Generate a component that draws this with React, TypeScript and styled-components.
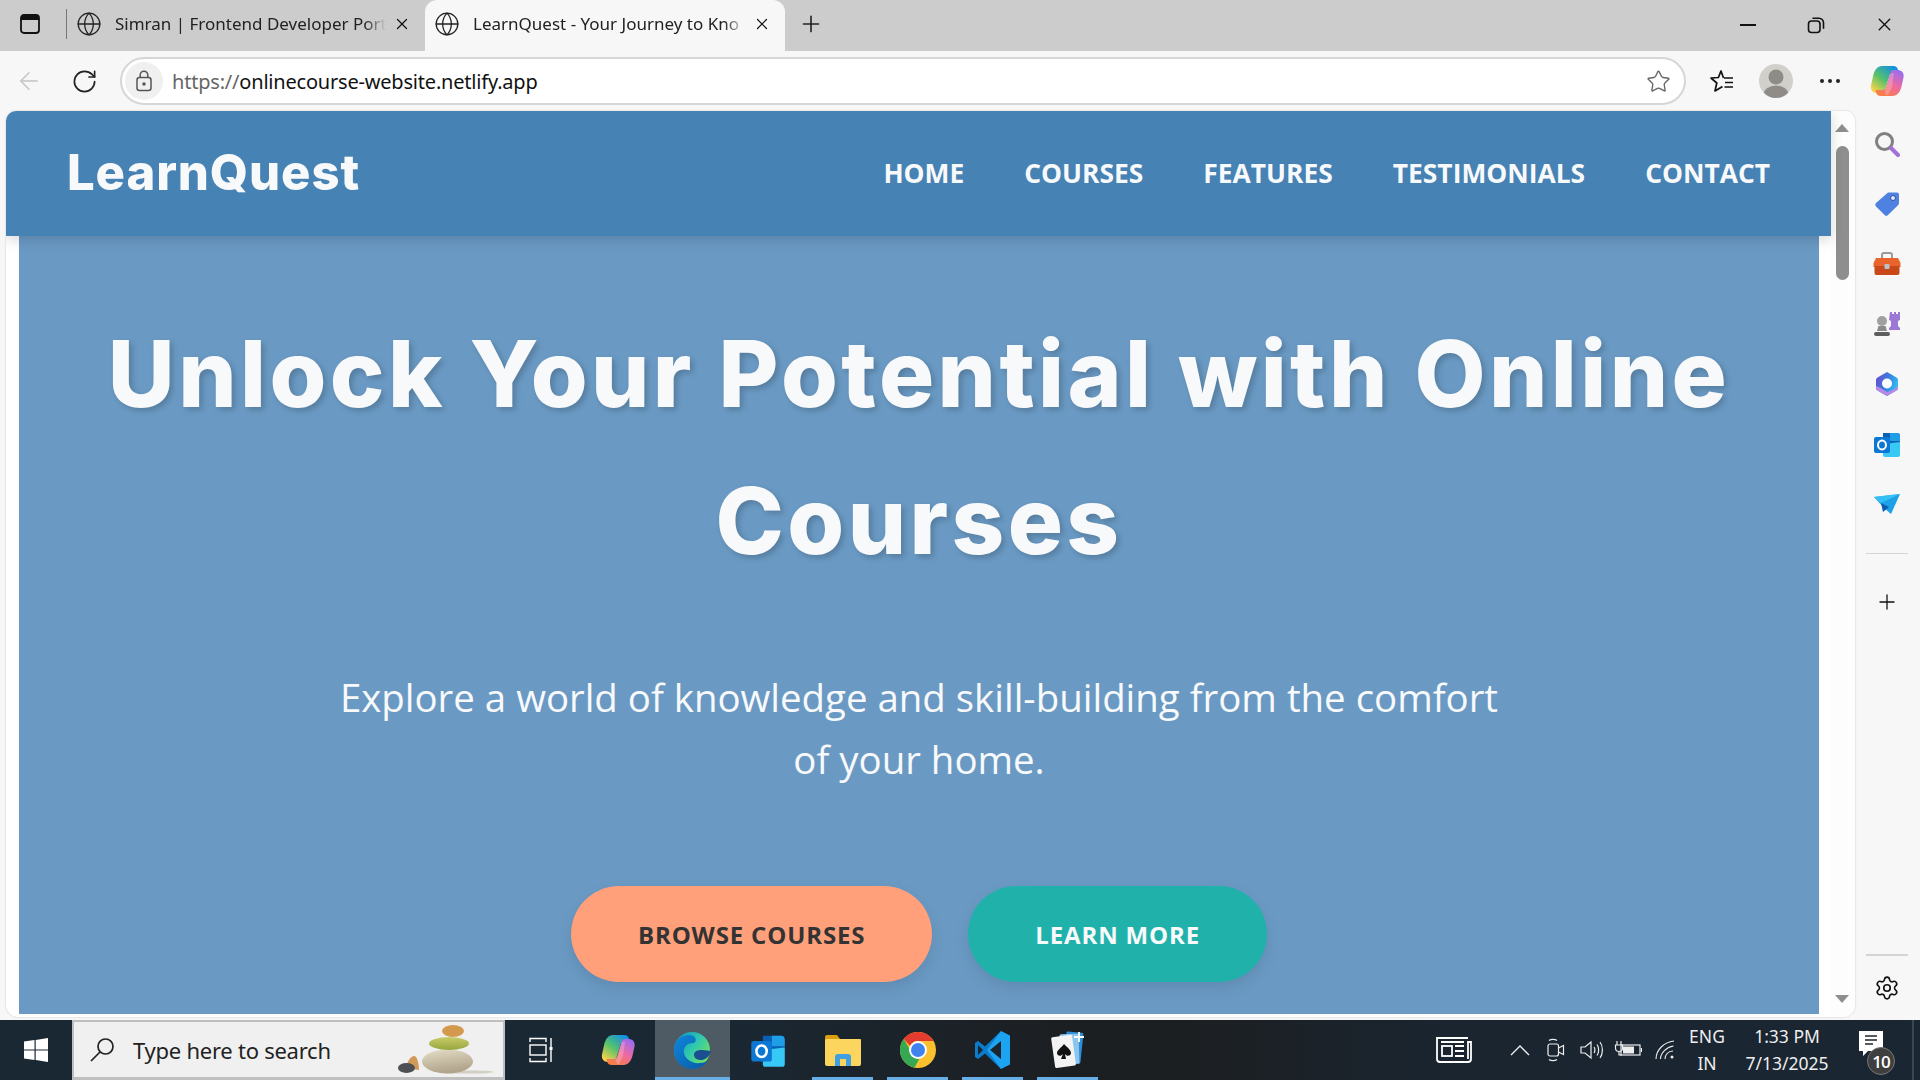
import React from "react";
import styled, { createGlobalStyle } from "styled-components";
import { ArrowLeft, Globe, Plus, RotateCw, Settings, Star, X } from "lucide-react";

const GlobalStyle = createGlobalStyle`
  html, body { margin: 0; padding: 0; background: #f7f7f7; overflow: hidden; }
  * { box-sizing: border-box; }
`;

const Screen = styled.div`
  width: 1920px;
  height: 1080px;
  display: flex;
  flex-direction: column;
  overflow: hidden;
  font-family: "Open Sans", sans-serif;
`;

/* browser chrome */
const TabStrip = styled.div`
  height: 51px;
  background: #cccccc;
  display: flex;
  align-items: center;
  flex-shrink: 0;
`;

const PaneButton = styled.div`
  width: 66px;
  display: flex;
  justify-content: center;
  padding: 0 6px 3px 0;
`;

const TabSeparator = styled.div`
  width: 1px;
  height: 30px;
  background: #777;
  margin: 0 5px 3px 0;
`;

const Tab = styled.div<{ $active?: boolean }>`
  width: ${(p) => (p.$active ? 360 : 353)}px;
  height: 51px;
  display: flex;
  align-items: center;
  gap: 13px;
  padding: 0 14px 4px ${(p) => (p.$active ? 9 : 4)}px;
  background: ${(p) => (p.$active ? "#f7f7f7" : "transparent")};
  border-radius: ${(p) => (p.$active ? "12px 12px 0 0" : "0")};
  color: #222;
`;

const TabTitle = styled.span`
  flex: 1;
  margin-right: -6px;
  overflow: hidden;
  white-space: nowrap;
  font-family: "Noto Sans", sans-serif;
  font-size: 17px;
  letter-spacing: 0;
  -webkit-mask-image: linear-gradient(90deg, #000 92%, transparent 100%);
  mask-image: linear-gradient(90deg, #000 92%, transparent 100%);
`;

const NewTab = styled.div`
  width: 52px;
  display: flex;
  justify-content: center;
  padding-bottom: 4px;
`;

const WindowControls = styled.div`
  margin-left: auto;
  display: flex;
  align-items: center;
  padding: 0 1px 2px 0;
`;

const WindowButton = styled.div`
  width: 68.5px;
  display: flex;
  justify-content: center;
`;

const Toolbar = styled.div`
  height: 60px;
  background: #f7f7f7;
  display: flex;
  align-items: center;
  flex-shrink: 0;
`;

const NavButton = styled.div`
  width: 55px;
  display: flex;
  justify-content: center;
  padding-left: 3px;
`;

const AddressBar = styled.div`
  width: 1566px;
  height: 48px;
  margin-left: 10px;
  border: 2px solid #d6d6d6;
  border-radius: 24px;
  background: #fff;
  display: flex;
  align-items: center;
  padding: 0 13px 0 3px;
`;

const LockBadge = styled.div`
  width: 38px;
  height: 38px;
  border-radius: 50%;
  background: #f0f0f0;
  display: flex;
  align-items: center;
  justify-content: center;
  margin-right: 9px;
`;

const Url = styled.div`
  flex: 1;
  font-family: "Noto Sans", sans-serif;
  font-size: 20px;
  letter-spacing: -0.2px;
  color: #111;
  span {
    color: #666;
  }
`;

const ToolbarIcons = styled.div`
  display: flex;
  align-items: center;
`;

const ToolbarIcon = styled.div<{ $w: number }>`
  width: ${(p) => p.$w}px;
  display: flex;
  justify-content: center;
`;

const Avatar = styled.div`
  width: 34px;
  height: 34px;
  border-radius: 50%;
  background: #d2d0cb;
  overflow: hidden;
  display: flex;
`;

/* page area */
const Main = styled.div`
  height: 909px;
  display: flex;
  background: #f7f7f7;
  flex-shrink: 0;
`;

const PageFrame = styled.div`
  flex: 1;
  margin: 0 0 3px 6px;
  background: #fff;
  border-radius: 10px 10px 12px 12px;
  box-shadow: 0 0 2px rgba(0, 0, 0, 0.22);
  overflow: hidden;
  display: flex;
`;

const Viewport = styled.div`
  width: 1825px;
  display: flex;
  flex-direction: column;
  padding-bottom: 3px;
`;

const SiteHeader = styled.header`
  position: relative;
  z-index: 2;
  height: 125px;
  flex-shrink: 0;
  background: #4682b4;
  box-shadow: 0 4px 12px rgba(0, 0, 0, 0.15);
  display: flex;
  align-items: center;
  justify-content: space-between;
  padding: 0 61px 2px 61px;
`;

const Logo = styled.div`
  font-family: Inter, sans-serif;
  font-size: 49px;
  font-weight: 800;
  letter-spacing: 0.9px;
  color: #f8f9fa;
`;

const NavLinks = styled.nav`
  display: flex;
  gap: 60px;
`;

const NavLink = styled.a`
  font-size: 26.4px;
  font-weight: 700;
  color: #f8f9fa;
`;

const Hero = styled.section`
  flex: 1;
  margin: 0 12px 0 13px;
  background: #6a9ac4;
  overflow: hidden;
  display: flex;
  flex-direction: column;
  align-items: center;
  padding-top: 64px;
`;

const HeroTitle = styled.h1`
  margin: 0;
  width: 1700px;
  text-align: center;
  font-family: Inter, sans-serif;
  font-size: 92px;
  font-weight: 800;
  letter-spacing: 3.4px;
  line-height: 147px;
  color: #f8f9fa;
  text-shadow: 3px 3px 6px rgba(0, 0, 0, 0.2);
`;

const HeroText = styled.p`
  margin: 72px 0 0;
  width: 1200px;
  text-align: center;
  font-size: 38.4px;
  line-height: 62px;
  color: #f8f9fa;
`;

const HeroActions = styled.div`
  display: flex;
  gap: 36px;
  margin-top: 96px;
`;

const HeroButton = styled.a<{ $tone: "coral" | "teal" }>`
  height: 96px;
  padding: 0 67px;
  border-radius: 50px;
  display: flex;
  align-items: center;
  font-size: 24px;
  font-weight: 700;
  letter-spacing: 0.85px;
  background: ${(p) => (p.$tone === "coral" ? "#ffa07a" : "#20b2aa")};
  color: ${(p) => (p.$tone === "coral" ? "#333" : "#f8f9fa")};
  box-shadow: 0 6px 15px rgba(0, 0, 0, 0.1);
`;

const ScrollTrack = styled.div`
  flex: 1;
  background: #fdfdfd;
  display: flex;
  flex-direction: column;
  align-items: center;
  padding: 13px 2px 14px 0;
`;

const ScrollArrow = styled.div<{ $down?: boolean }>`
  width: 0;
  height: 0;
  border-left: 7.5px solid transparent;
  border-right: 7.5px solid transparent;
  ${(p) =>
    p.$down
      ? "border-top: 8px solid #8e8e8e; margin-top: auto;"
      : "border-bottom: 8px solid #8e8e8e;"}
`;

const ScrollThumb = styled.div`
  width: 13px;
  height: 134px;
  margin-top: 14px;
  border-radius: 7px;
  background: #8e8e8e;
`;

const SideBar = styled.aside`
  width: 65px;
  display: flex;
  flex-direction: column;
  align-items: center;
  padding: 18px 2px 0 0;
`;

const SideIcon = styled.div`
  width: 30px;
  height: 30px;
  margin-bottom: 30px;
  display: flex;
  align-items: center;
  justify-content: center;
`;

const SideRule = styled.div<{ $bottom?: boolean }>`
  width: 42px;
  height: ${(p) => (p.$bottom ? 2 : 1)}px;
  background: #d4d4d4;
  flex-shrink: 0;
  margin: ${(p) => (p.$bottom ? "auto 0 19px" : "4px 0 33px")};
`;

const SideGear = styled.div`
  margin-bottom: 19px;
  display: flex;
`;

/* taskbar */
const Taskbar = styled.div`
  height: 60px;
  flex-shrink: 0;
  display: flex;
  align-items: center;
  background: linear-gradient(90deg, #1a2834 0%, #1a2834 36%, #1c1f22 55%, #1c1f22 62%, #1a2530 76%, #1a2632 100%);
  color: #f2f2f2;
`;

const StartButton = styled.div`
  width: 72px;
  height: 60px;
  display: flex;
  align-items: center;
  justify-content: center;
`;

const SearchBox = styled.div`
  position: relative;
  width: 433px;
  height: 60px;
  border: 2px solid #bfbfbf;
  border-bottom-width: 3px;
  background: #f0f0f0;
  display: flex;
  align-items: center;
  padding: 1px 0 0 15px;
  gap: 18px;
  color: #222;
  font-size: 22px;
  font-family: "Noto Sans", sans-serif;
  letter-spacing: -0.25px;
`;

const Stones = styled.svg`
  position: absolute;
  right: 5px;
  top: 0;
`;

const TaskButton = styled.div<{ $active?: boolean; $open?: boolean }>`
  position: relative;
  width: 75px;
  height: 60px;
  display: flex;
  align-items: center;
  justify-content: center;
  background: ${(p) => (p.$active ? "#4e5a64" : "transparent")};
  ${(p) =>
    p.$open &&
    `&::after {
      content: "";
      position: absolute;
      left: ${p.$active ? 0 : 7}px;
      right: ${p.$active ? 0 : 7}px;
      bottom: 0;
      height: 3px;
      background: #67aee6;
    }`}
`;

const Tray = styled.div`
  margin: 0 6px 0 auto;
  height: 60px;
  display: flex;
  align-items: center;
  padding-right: 2px;
  border-right: 2px solid #3a4650;
`;

const TrayIcon = styled.div<{ $w: number }>`
  width: ${(p) => p.$w}px;
  display: flex;
  justify-content: center;
`;

const TrayText = styled.div<{ $w: number }>`
  width: ${(p) => p.$w}px;
  text-align: center;
  font-family: "Noto Sans", sans-serif;
  font-size: 17.5px;
  line-height: 27px;
  color: #eee;
`;

const NotifyBox = styled.div`
  position: relative;
  width: 71px;
  height: 60px;
  display: flex;
  align-items: center;
  padding-left: 20px;
`;

const NotifyBubble = styled.svg`
  margin-top: -12px;
`;

const NotifyCount = styled.div`
  position: absolute;
  left: 28px;
  top: 27px;
  width: 28px;
  height: 28px;
  border-radius: 50%;
  background: #3f3f3f;
  border: 1px solid #777;
  display: flex;
  align-items: center;
  justify-content: center;
  font-size: 17px;
  font-weight: 600;
  letter-spacing: -1px;
  color: #fff;
`;

const RestoreIcon = () => (
  <svg width="18" height="18" viewBox="0 0 18 18" fill="none" stroke="#111" strokeWidth="1.6">
    <rect x="1.5" y="5" width="11.5" height="11.5" rx="3" />
    <path d="M5.5 2.2h6.5a4.5 4.5 0 0 1 4.5 4.5v6" />
  </svg>
);

const PaneIcon = () => (
  <svg width="22" height="22" viewBox="0 0 22 22" fill="none">
    <rect x="2" y="2" width="18" height="18" rx="3" stroke="#111" strokeWidth="1.8" />
    <path d="M2 7V5a3 3 0 0 1 3-3h12a3 3 0 0 1 3 3v2z" fill="#111" />
  </svg>
);

const LockIcon = () => (
  <svg width="20" height="24" viewBox="0 0 20 24" fill="none" stroke="#555" strokeWidth="1.5">
    <rect x="3" y="8.5" width="14" height="13" rx="2.5" />
    <path d="M6.2 8.5V6a3.8 3.8 0 0 1 7.6 0v2.5" />
    <circle cx="10" cy="15" r="1" fill="#555" />
  </svg>
);

const FavoritesIcon = () => (
  <svg width="26" height="26" viewBox="0 0 26 26" fill="none" stroke="#111" strokeWidth="1.7" strokeLinejoin="round">
    <path d="M14.500 10l-2.500-7-2.600 6.500L2 10l5.800 5-1.800 8 7.500-4.500" />
    <path d="M15 10h9M16 14.500h8M15.500 19h8.500" />
  </svg>
);

const AvatarShape = () => (
  <svg width="34" height="34" viewBox="0 0 34 34">
    <circle cx="17" cy="13" r="7.5" fill="#8f8b87" />
    <ellipse cx="17" cy="31" rx="12.5" ry="9.5" fill="#8f8b87" />
  </svg>
);

const DotsIcon = () => (
  <svg width="22" height="6" viewBox="0 0 22 6" fill="#222">
    <circle cx="3" cy="3" r="2" />
    <circle cx="11" cy="3" r="2" />
    <circle cx="19" cy="3" r="2" />
  </svg>
);

const CopilotIcon = ({ size = 34, id }: { size?: number; id: string }) => (
  <svg width={size} height={size} viewBox="0 0 34 34">
    <defs>
      <linearGradient id={`${id}a`} x1="0.1" y1="0.9" x2="0.8" y2="0">
        <stop offset="0" stopColor="#f7d348" />
        <stop offset="0.45" stopColor="#57c26a" />
        <stop offset="1" stopColor="#0f8fe8" />
      </linearGradient>
      <linearGradient id={`${id}b`} x1="0.2" y1="1" x2="0.8" y2="0">
        <stop offset="0" stopColor="#f9803d" />
        <stop offset="0.5" stopColor="#ee6aa0" />
        <stop offset="1" stopColor="#9a6cf0" />
      </linearGradient>
    </defs>
    <path d="M23 2c3 0 4.500 1.500 5 4l1 4h-9l-5 16c-.6 2-2.300 3-4.400 3H7C2.600 29 .2 25.500 1 21.500l2.200-10C4.400 6 7.600 2 12 2z" fill={`url(#${id}a)`} />
    <path d="M11 32c-3 0-4.500-1.500-5-4l-.6-2H13c1.500 0 2.500-1 3-2.500L20.500 8.500C21 7 22 6 24 6h3.500c4.400 0 6.800 3 6 7.500l-2 9C30.300 28 27 32 22.500 32z" fill={`url(#${id}b)`} />
    <path d="M21 9l-4.700 15c-.3 1-.9 1.800-1.800 2.300L16 31h2l4-8 2-14z" fill="#fff" opacity="0.22" />
  </svg>
);

const MagnifierIcon = () => (
  <svg width="26" height="26" viewBox="0 0 26 26" fill="none">
    <circle cx="10.500" cy="10.500" r="8" stroke="#808080" strokeWidth="3" />
    <path d="M17 17l7 7" stroke="#a56fd8" strokeWidth="4" strokeLinecap="round" />
  </svg>
);

const TagIcon = () => (
  <svg width="26" height="26" viewBox="0 0 26 26">
    <path d="M14 1.500h9a2 2 0 0 1 2 2V12a3 3 0 0 1-1 2.200L14 24a2.400 2.400 0 0 1-3.400 0L2 15.400A2.400 2.400 0 0 1 2 12z" fill="#4f82e0" />
    <circle cx="19" cy="7" r="2.500" fill="#dfe8fb" stroke="#2f4f9f" strokeWidth="1" />
  </svg>
);

const ToolboxIcon = () => (
  <svg width="28" height="24" viewBox="0 0 28 24">
    <path d="M9 6V3a2 2 0 0 1 2-2h6a2 2 0 0 1 2 2v3" fill="none" stroke="#9a9a9a" strokeWidth="2" />
    <path d="M3 6h22l2.500 5v4H.5v-4z" fill="#e8642c" />
    <path d="M1.500 14h25v7a2 2 0 0 1-2 2h-21a2 2 0 0 1-2-2z" fill="#c9481a" />
    <rect x="11.500" y="12" width="5" height="5" rx="1" fill="#b9c2c9" />
  </svg>
);

const ChessIcon = () => (
  <svg width="28" height="28" viewBox="0 0 28 28">
    <path d="M17 2h2v2h2V2h2v2h2V2h2v8l-2 1v5l2 2v2H16v-2l2-2v-5l-2-1z" fill="#9c78d6" />
    <circle cx="9" cy="11" r="5" fill="#a0a0a0" />
    <path d="M5.500 16h7l1.500 5h-10z" fill="#8a8a8a" />
    <rect x="1" y="22" width="16" height="4" rx="2" fill="#5e5e5e" />
  </svg>
);

const M365Icon = () => (
  <svg width="28" height="28" viewBox="0 0 28 28">
    <defs>
      <linearGradient id="m365" x1="0" y1="0.2" x2="1" y2="0.6">
        <stop offset="0" stopColor="#6a4fd0" />
        <stop offset="0.5" stopColor="#3b7ae0" />
        <stop offset="1" stopColor="#32c5f0" />
      </linearGradient>
    </defs>
    <path d="M14 2l9.500 5.500a3 3 0 0 1 1.500 2.600v7.800a3 3 0 0 1-1.500 2.600L14 26 4.500 20.500A3 3 0 0 1 3 17.900v-7.800a3 3 0 0 1 1.500-2.600z" fill="url(#m365)" />
    <path d="M3 16c3 1 7 3 11 6 4-1 8-3 11-6v2c0 1-.5 2-1.500 2.500L14 26 4.500 20.500A3 3 0 0 1 3 18z" fill="#b48ae6" />
    <circle cx="14" cy="13.500" r="5" fill="#fff" />
  </svg>
);

const OutlookIcon = ({ size = 28 }: { size?: number }) => (
  <svg width={size} height={size} viewBox="0 0 28 28">
    <path d="M10 3h14a3 3 0 0 1 3 3v19H10z" fill="#0a5fb4" />
    <path d="M17 3h7a3 3 0 0 1 3 3v5h-10z" fill="#1f9ee8" />
    <path d="M10 14l17-2v13a2 2 0 0 1-2 2H12a2 2 0 0 1-2-2z" fill="#38c8f5" />
    <rect x="1" y="7" width="16" height="16" rx="2" fill="#0c78d4" />
    <ellipse cx="9" cy="15" rx="4" ry="4.500" fill="none" stroke="#fff" strokeWidth="2" />
  </svg>
);

const TelegramIcon = () => (
  <svg width="28" height="22" viewBox="0 0 28 22">
    <path d="M1 4l26-3-9 20-7-6z" fill="#1ea0e6" />
    <path d="M27 1L8 10 1 4z" fill="#35c0f5" />
    <path d="M8 10l2 9 6-5z" fill="#0b5db0" />
  </svg>
);

const WindowsLogo = () => (
  <svg width="24" height="24" viewBox="0 0 24 24" fill="#fff">
    <path d="M0 3.500l10.500-1.400v9.300H0zM11.700 1.900L24 0v11.400H11.700zM0 12.600h10.500v9.300L0 20.500zM11.700 12.600H24V24l-12.300-1.900z" />
  </svg>
);

const SearchGlass = () => (
  <svg width="26" height="26" viewBox="0 0 26 26" fill="none" stroke="#222" strokeWidth="1.7">
    <circle cx="16.500" cy="9.500" r="7.500" />
    <path d="M11 15L2 24" />
  </svg>
);

const StonesArt = () => (
  <Stones width="100" height="54" viewBox="0 0 100 54">
    <defs>
      <linearGradient id="st1" x1="0" y1="0" x2="0.3" y2="1">
        <stop offset="0" stopColor="#e4ddc8" />
        <stop offset="1" stopColor="#b0a48a" />
      </linearGradient>
      <linearGradient id="st2" x1="0" y1="0" x2="0" y2="1">
        <stop offset="0" stopColor="#c8cc6a" />
        <stop offset="1" stopColor="#98a63c" />
      </linearGradient>
    </defs>
    <ellipse cx="68" cy="50" rx="28" ry="1.600" fill="#d2cec2" />
    <ellipse cx="49.500" cy="39.500" rx="25.500" ry="12" fill="url(#st1)" />
    <ellipse cx="51" cy="21.500" rx="20" ry="6.500" fill="url(#st2)" />
    <ellipse cx="55" cy="9" rx="11" ry="6" fill="#d39a4e" />
    <path d="M8 46c1-7 5-12 8-12 3 0 5 7 5 14z" fill="#d29a58" />
    <ellipse cx="8.500" cy="46" rx="8.500" ry="5" fill="#4c5054" />
  </Stones>
);

const TaskViewIcon = () => (
  <svg width="30" height="26" viewBox="0 0 30 26" fill="none" stroke="#fff" strokeWidth="1.400">
    <path d="M2 5V1.500h16V5M2 21v3.500h16V21" />
    <rect x="2" y="8" width="16" height="10" />
    <path d="M23 1v24" />
    <rect x="21.500" y="10" width="3" height="3" fill="#fff" stroke="none" />
  </svg>
);

const EdgeIcon = () => (
  <svg width="38" height="40" viewBox="0 0 38 40">
    <defs>
      <linearGradient id="edgeA" x1="0" y1="0" x2="1" y2="0.7">
        <stop offset="0" stopColor="#0c8fc4" />
        <stop offset="0.55" stopColor="#2ec7b0" />
        <stop offset="1" stopColor="#73e25f" />
      </linearGradient>
      <linearGradient id="edgeB" x1="0" y1="0" x2="1" y2="1">
        <stop offset="0" stopColor="#0f86d9" />
        <stop offset="1" stopColor="#0a5aa8" />
      </linearGradient>
    </defs>
    <circle cx="18" cy="20" r="18" fill="url(#edgeA)" />
    <path d="M0 20C0 10 8 5 15 5c6 0 9 5 5 8-8 0-11 5-10 10 1 6 8 11 16 10 3 0 6-1 8-3-3 6-9 9-16 9C8 39 0 31 0 20z" fill="url(#edgeB)" />
    <path d="M20 25c0-4 4-5 8-5 4 0 7 1 9 1-1 4-4 8-9 9-5 0-8-2-8-5z" fill="#1b4f91" />
  </svg>
);

const FolderIcon = () => (
  <svg width="36" height="32" viewBox="0 0 36 32">
    <path d="M0 3a2 2 0 0 1 2-2h10l3 4h21v4H0z" fill="#d99f0f" />
    <rect x="0" y="5" width="36" height="27" rx="2" fill="#fcd55e" />
    <path d="M10 32v-9a3 3 0 0 1 3-3h10a3 3 0 0 1 3 3v9h-5v-7h-6v7z" fill="#3f9fe0" />
  </svg>
);

const ChromeIcon = () => (
  <svg width="36" height="36" viewBox="0 0 36 36">
    <circle cx="18" cy="18" r="18" fill="#fbc02d" />
    <path d="M18 0a18 18 0 0 1 15.600 9H18a9 9 0 0 0-8 5L3.700 7A18 18 0 0 1 18 0z" fill="#e33b2e" />
    <path d="M3.700 7L11 19.500a8 8 0 0 0 9 6l-5.500 10.200A18 18 0 0 1 3.700 7z" fill="#34a853" />
    <circle cx="18" cy="18" r="9" fill="#fff" />
    <circle cx="18" cy="18" r="7" fill="#3f83ee" />
  </svg>
);

const VsCodeIcon = () => (
  <svg width="36" height="40" viewBox="0 0 36 40">
    <path d="M26 1L10 16.500 3 11 0 13v14l3 2 7-5.500L26 39z" fill="#0a7ccb" />
    <path d="M26 1l9 4.500v29L26 39 12 20z" fill="#1ca3f2" />
    <path d="M26 11L15 20l11 9z" fill="#1a2530" />
    <path d="M3 15l5 5-5 5z" fill="#1a2530" />
  </svg>
);

const SolitaireIcon = () => (
  <svg width="34" height="38" viewBox="0 0 34 38">
    <rect x="14" y="1" width="17" height="31" rx="1.500" fill="#2e8ed8" transform="rotate(6 22 16)" />
    <rect x="9" y="3" width="19" height="30" rx="1.500" fill="#8cc6ee" transform="rotate(-2 18 18)" />
    <rect x="2" y="5" width="21" height="31" rx="1.500" fill="#f3f3f3" transform="rotate(-8 12 20)" />
    <path d="M13 13c4 4 7 6 7 9 0 3-4 4-6 1l1 5h-5l2-5c-2 3-6 2-6-1 0-3 4-5 7-9z" fill="#111" />
    <path d="M28 1v10M23 6h10" stroke="#fff" strokeWidth="1.800" />
  </svg>
);

const NewsIcon = () => (
  <svg width="36" height="26" viewBox="0 0 36 26" fill="none" stroke="#fff" strokeWidth="1.800">
    <path d="M32 1H1v21a3 3 0 0 0 3 3h28a3 3 0 0 0 3-3V5h-3v17" />
    <rect x="6" y="9" width="10" height="10" />
    <path d="M19 9h9M19 14h9M19 19h9M5 5h23" />
  </svg>
);

const ChevronIcon = () => (
  <svg width="20" height="12" viewBox="0 0 20 12" fill="none" stroke="#eee" strokeWidth="1.400">
    <path d="M1 11l9-9 9 9" />
  </svg>
);

const MeetIcon = () => (
  <svg width="18" height="24" viewBox="0 0 18 24" fill="none" stroke="#eee" strokeWidth="1.200">
    <rect x="1" y="6" width="10.500" height="12" rx="2" />
    <path d="M11.500 10l5-2.500v9l-5-2.500" />
    <path d="M2 2.500c2-1.500 6-1.500 8 0M2 21.500c2 1.500 6 1.500 8 0" />
  </svg>
);

const SpeakerIcon = () => (
  <svg width="24" height="22" viewBox="0 0 24 22" fill="none" stroke="#eee" strokeWidth="1.200">
    <path d="M1 8v6h4l6 5V3L5 8z" />
    <path d="M14 8c1.200 1.500 1.200 4.500 0 6M17 5.500c2.200 3 2.200 8 0 11M20 3c3.200 4 3.200 12 0 16" />
  </svg>
);

const BatteryIcon = () => (
  <svg width="28" height="20" viewBox="0 0 28 20" fill="none" stroke="#eee" strokeWidth="1.200">
    <path d="M3 1v4M7 1v4M1.500 5h7v3a3.500 3.500 0 0 1-7 0zM5 11.500V15h3" />
    <rect x="7" y="5" width="19" height="10" />
    <rect x="9" y="6.500" width="11" height="7" fill="#eee" stroke="none" />
    <path d="M27.500 8v4" />
  </svg>
);

const WifiIcon = () => (
  <svg width="20" height="20" viewBox="0 0 20 20" fill="none" stroke="#eee" strokeWidth="1.100">
    <path d="M1 19C1 10 9 2 19 1M5.500 19c0-6 6-12 13-13M10 19c0-4 3-8 8-8" />
    <circle cx="17" cy="17" r="1.500" fill="#eee" stroke="none" />
  </svg>
);

const NotifyIcon = () => (
  <NotifyBubble width="24" height="26" viewBox="0 0 24 26">
    <path d="M0 0h24v20H9l-5 5v-5H0z" fill="#fff" />
    <path d="M6 5h12M6 9h12M6 13h8" stroke="#1a2632" strokeWidth="1.300" />
  </NotifyBubble>
);

const tabs = [
  { title: "Simran | Frontend Developer Port" },
  { title: "LearnQuest - Your Journey to Kno", active: true },
];

const navItems = ["HOME", "COURSES", "FEATURES", "TESTIMONIALS", "CONTACT"];

export default function App() {
  return (
    <Screen>
      <GlobalStyle />
      <TabStrip>
        <PaneButton>
          <PaneIcon />
        </PaneButton>
        <TabSeparator />
        {tabs.map((t) => (
          <Tab key={t.title} $active={t.active}>
            <Globe size={26} strokeWidth={1.2} color="#222" />
            <TabTitle>{t.title}</TabTitle>
            <X size={18} strokeWidth={1.6} color="#111" />
          </Tab>
        ))}
        <NewTab>
          <Plus size={26} strokeWidth={1.5} color="#222" />
        </NewTab>
        <WindowControls>
          <WindowButton>
            <svg width="16" height="2" viewBox="0 0 16 2">
              <rect width="16" height="2" fill="#111" />
            </svg>
          </WindowButton>
          <WindowButton>
            <RestoreIcon />
          </WindowButton>
          <WindowButton>
            <X size={21} strokeWidth={1.6} color="#111" />
          </WindowButton>
        </WindowControls>
      </TabStrip>

      <Toolbar>
        <NavButton>
          <ArrowLeft size={28} strokeWidth={1.2} color="#c4c4c4" />
        </NavButton>
        <NavButton>
          <RotateCw size={27} strokeWidth={1.5} color="#222" />
        </NavButton>
        <AddressBar>
          <LockBadge>
            <LockIcon />
          </LockBadge>
          <Url>
            <span>https://</span>onlinecourse-website.netlify.app
          </Url>
          <Star size={25} strokeWidth={1.3} color="#666" />
        </AddressBar>
        <ToolbarIcons>
          <ToolbarIcon $w={72}>
            <FavoritesIcon />
          </ToolbarIcon>
          <ToolbarIcon $w={36}>
            <Avatar>
              <AvatarShape />
            </Avatar>
          </ToolbarIcon>
          <ToolbarIcon $w={72}>
            <DotsIcon />
          </ToolbarIcon>
          <ToolbarIcon $w={42}>
            <CopilotIcon id="cpTop" />
          </ToolbarIcon>
        </ToolbarIcons>
      </Toolbar>

      <Main>
        <PageFrame>
          <Viewport>
            <SiteHeader>
              <Logo>LearnQuest</Logo>
              <NavLinks>
                {navItems.map((n) => (
                  <NavLink key={n}>{n}</NavLink>
                ))}
              </NavLinks>
            </SiteHeader>
            <Hero>
              <HeroTitle>Unlock Your Potential with Online Courses</HeroTitle>
              <HeroText>
                Explore a world of knowledge and skill-building from the comfort of your home.
              </HeroText>
              <HeroActions>
                <HeroButton $tone="coral">BROWSE COURSES</HeroButton>
                <HeroButton $tone="teal">LEARN MORE</HeroButton>
              </HeroActions>
            </Hero>
          </Viewport>
          <ScrollTrack>
            <ScrollArrow />
            <ScrollThumb />
            <ScrollArrow $down />
          </ScrollTrack>
        </PageFrame>
        <SideBar>
          <SideIcon>
            <MagnifierIcon />
          </SideIcon>
          <SideIcon>
            <TagIcon />
          </SideIcon>
          <SideIcon>
            <ToolboxIcon />
          </SideIcon>
          <SideIcon>
            <ChessIcon />
          </SideIcon>
          <SideIcon>
            <M365Icon />
          </SideIcon>
          <SideIcon>
            <OutlookIcon />
          </SideIcon>
          <SideIcon>
            <TelegramIcon />
          </SideIcon>
          <SideRule />
          <SideIcon>
            <Plus size={24} strokeWidth={1.3} color="#111" />
          </SideIcon>
          <SideRule $bottom />
          <SideGear>
            <Settings size={26} strokeWidth={1.5} color="#111" />
          </SideGear>
        </SideBar>
      </Main>

      <Taskbar>
        <StartButton>
          <WindowsLogo />
        </StartButton>
        <SearchBox>
          <SearchGlass />
          Type here to search
          <StonesArt />
        </SearchBox>
        <TaskButton>
          <TaskViewIcon />
        </TaskButton>
        <TaskButton>
          <CopilotIcon id="cpTask" />
        </TaskButton>
        <TaskButton $active $open>
          <EdgeIcon />
        </TaskButton>
        <TaskButton>
          <OutlookIcon size={36} />
        </TaskButton>
        <TaskButton $open>
          <FolderIcon />
        </TaskButton>
        <TaskButton $open>
          <ChromeIcon />
        </TaskButton>
        <TaskButton $open>
          <VsCodeIcon />
        </TaskButton>
        <TaskButton $open>
          <SolitaireIcon />
        </TaskButton>
        <Tray>
          <TrayIcon $w={106}>
            <NewsIcon />
          </TrayIcon>
          <TrayIcon $w={26}>
            <ChevronIcon />
          </TrayIcon>
          <TrayIcon $w={46}>
            <MeetIcon />
          </TrayIcon>
          <TrayIcon $w={26}>
            <SpeakerIcon />
          </TrayIcon>
          <TrayIcon $w={46}>
            <BatteryIcon />
          </TrayIcon>
          <TrayIcon $w={28}>
            <WifiIcon />
          </TrayIcon>
          <TrayText $w={56}>
            ENG
            <br />
            IN
          </TrayText>
          <TrayText $w={104}>
            1:33 PM
            <br />
            7/13/2025
          </TrayText>
          <NotifyBox>
            <NotifyIcon />
            <NotifyCount>10</NotifyCount>
          </NotifyBox>
        </Tray>
      </Taskbar>
    </Screen>
  );
}
